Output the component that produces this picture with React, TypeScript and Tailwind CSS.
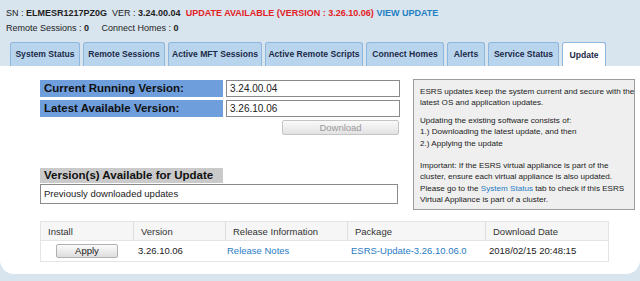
const tabs = [
  { label: 'System Status', w: 'w-[70px]' },
  { label: 'Remote Sessions', w: 'w-[82px]' },
  { label: 'Active MFT Sessions', w: 'w-[94px]' },
  { label: 'Active Remote Scripts', w: 'w-[98px]' },
  { label: 'Connect Homes', w: 'w-[78px]' },
  { label: 'Alerts', w: 'w-[38px]' },
  { label: 'Service Status', w: 'w-[71px]' },
  { label: 'Update', w: 'w-[44px]', active: true },
]

const cols = [
  { head: 'Install', w: 'w-[92px]' },
  { head: 'Version', w: 'w-[92px]' },
  { head: 'Release Information', w: 'w-[122px]' },
  { head: 'Package', w: 'w-[138px]' },
  { head: 'Download Date', w: 'flex-1' },
]

const App = () => {
  return (
    <div className="w-[640px] h-[281px] overflow-hidden bg-[#d8e4ee] text-[#222]" style={{ fontFamily: '"Liberation Sans", Arial, sans-serif' }}>
      {/* header */}
      <div className="px-[6px] pt-[7px] text-[9px] leading-[13px]">
        <div className="whitespace-nowrap">
          SN : <b>ELMESR1217PZ0G</b>&nbsp; VER : <b>3.24.00.04</b>&nbsp;{' '}
          <b className="text-[#e3211f]">UPDATE AVAILABLE (VERSION : 3.26.10.06)</b>{' '}
          <b className="text-[#1f7fc2]">VIEW UPDATE</b>
        </div>
        <div className="mt-[2px] whitespace-nowrap">
          Remote Sessions : <b>0</b>&nbsp;&nbsp;&nbsp;&nbsp; Connect Homes : <b>0</b>
        </div>
      </div>

      {/* tabs */}
      <div className="flex gap-[3px] pl-[10px] mt-[7px] h-[24px]">
        {tabs.map((t) => (
          <div
            key={t.label}
            className={`${t.w} flex items-center justify-center rounded-t-[3px] border border-b-0 border-[#8db7dd] text-[8.6px] font-bold text-[#1c2a47] whitespace-nowrap ${
              t.active ? 'bg-white h-[25px]' : 'bg-[#b9d5ee] h-[24px]'
            }`}
          >
            {t.label}
          </div>
        ))}
      </div>

      {/* panel */}
      <div className="bg-white h-[208px] rounded-b-[14px] pl-[40px] pt-[14px] relative">
        <div className="flex">
          <div className="w-[373px]">
            <div className="flex gap-[3px] h-[17px]">
              <div className="w-[183px] bg-[#6e9edb] text-[11.5px] font-bold leading-[17px] pl-[4px] text-[#111]">Current Running Version:</div>
              <div className="w-[174px] border border-[#8a8a8a] text-[10px] leading-[15px] pl-[3px]">3.24.00.04</div>
            </div>
            <div className="flex gap-[3px] h-[17px] mt-[3px]">
              <div className="w-[183px] bg-[#6e9edb] text-[11.5px] font-bold leading-[17px] pl-[4px] text-[#111]">Latest Available Version:</div>
              <div className="w-[174px] border border-[#8a8a8a] text-[10px] leading-[15px] pl-[3px]">3.26.10.06</div>
            </div>
            <div className="flex justify-end pr-[14px] mt-[3px]">
              <div className="w-[117px] h-[15px] border border-[#c4c4c4] rounded-[2px] bg-gradient-to-b from-[#fafafa] to-[#e2e2e2] text-[9.5px] leading-[13px] text-center text-[#9a9a9a]">Download</div>
            </div>
            <div className="mt-[33px] w-[183px] h-[15px] bg-[#cacaca] text-[11.5px] font-bold leading-[15px] pl-[4px] text-[#111]">Version(s) Available for Update</div>
            <div className="mt-[1px] w-[358px] h-[20px] border border-[#8a8a8a] text-[9.5px] leading-[18px] pl-[3px]">Previously downloaded updates</div>
          </div>
          <div className="w-[222px] h-[131px] -mt-[1px] border border-[#9c9c9c] bg-[#efefef] pl-[6px] pt-[6px] text-[8.1px] leading-[11.4px] text-[#222] whitespace-nowrap">
            <p>ESRS updates keep the system current and secure with the<br />latest OS and application updates.</p>
            <p className="mt-[6px]">Updating the existing software consists of:<br />1.) Downloading the latest update, and then<br />2.) Applying the update</p>
            <p className="mt-[11px]">
              Important: If the ESRS virtual appliance is part of the<br />
              cluster, ensure each virtual appliance is also updated.<br />
              Please go to the <span className="text-[#2a7cc2]">System Status</span> tab to check if this ESRS<br />
              Virtual Appliance is part of a cluster.
            </p>
          </div>
        </div>

        {/* table */}
        <div className="mt-[11px] w-[569px] border border-[#e4e4e4] text-[9.5px]">
          <div className="flex h-[19px] bg-[#f6f6f6] border-b border-[#e4e4e4]">
            {cols.map((c, i) => (
              <div key={c.head} className={`${c.w} pl-[7px] leading-[19px] text-[#333] ${i > 0 ? 'border-l border-[#dedede]' : ''}`}>{c.head}</div>
            ))}
          </div>
          <div className="flex h-[20px] items-center bg-white">
            <div className="w-[92px] flex justify-center">
              <div className="w-[62px] h-[14px] border border-[#b0b0b0] rounded-[2px] bg-gradient-to-b from-[#fbfbfb] to-[#dddddd] text-center leading-[12px] text-[#222]">Apply</div>
            </div>
            <div className="w-[92px] pl-[5px]">3.26.10.06</div>
            <div className="w-[122px] pl-[2px] text-[#2a7cc2]">Release Notes</div>
            <div className="w-[138px] pl-[4px] text-[#2a7cc2]">ESRS-Update-3.26.10.06.0</div>
            <div className="flex-1 pl-[4px]">2018/02/15 20:48:15</div>
          </div>
        </div>
      </div>
    </div>
  )
}

export default App
